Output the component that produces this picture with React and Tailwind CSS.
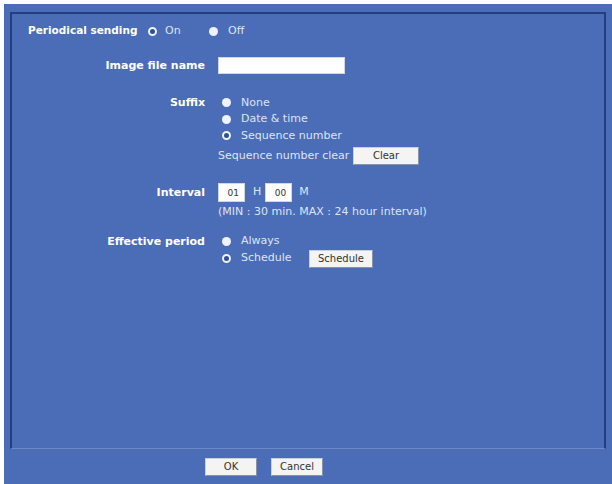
import React, { useState } from 'react';

const font = { fontFamily: '"DejaVu Sans", Verdana, sans-serif' };

const Radio = ({ checked, onClick }) => (
  <span
    onClick={onClick}
    className={`inline-block shrink-0 w-[9px] h-[9px] rounded-full cursor-pointer ${
      checked ? 'bg-[#2f4f96] border-[2.5px] border-[#eef2fb]' : 'bg-[#eef2fb]'
    }`}
  />
);

const Button = ({ children, className = '' }) => (
  <button
    type="button"
    className={`h-[18px] bg-[#f4f4f2] border border-[#c9cfd9] border-b-[#8a93a6] border-r-[#8a93a6] text-[10px] leading-none text-[#333] ${className}`}
  >
    {children}
  </button>
);

const Label = ({ children, className = '' }) => (
  <div className={`text-right text-[11px] font-bold text-white whitespace-nowrap ${className}`}>{children}</div>
);

export default function App() {
  const [sending, setSending] = useState('on');
  const [suffix, setSuffix] = useState('seq');
  const [period, setPeriod] = useState('schedule');

  return (
    <div className="w-[612px] h-[484px] bg-white pt-[4px] pl-[4px]" style={font}>
      <div className="h-[480px] bg-[#4b6db8] pt-[8px] pl-[6px] pr-[6px] flex flex-col">
        <div className="h-[437px] border-2 border-[#233f82] border-b-[#6b88c6] border-b-[1px] pl-[16px] pt-[9px]">
          {/* periodical sending */}
          <div className="flex items-center h-[16px] text-[11px]">
            <span className="w-[120px] text-[10.5px] font-bold text-white whitespace-nowrap">Periodical sending</span>
            <Radio checked={sending === 'on'} onClick={() => setSending('on')} />
            <span className="ml-[8px] w-[44px] text-[#dde4f4]">On</span>
            <Radio checked={sending === 'off'} onClick={() => setSending('off')} />
            <span className="ml-[10px] text-[#dde4f4]">Off</span>
          </div>

          <div className="grid grid-cols-[177px_1fr] gap-x-[13px] mt-[18px] text-[11px] text-[#dde4f4]">
            <Label className="pt-[1px]">Image file name</Label>
            <div>
              <input className="block w-[127px] h-[17px] bg-white border border-[#d0d6e2] outline-none" />
            </div>

            <Label className="mt-[20px]">Suffix</Label>
            <div className="mt-[20px] flex flex-col">
              {[
                ['none', 'None'],
                ['date', 'Date & time'],
                ['seq', 'Sequence number'],
              ].map(([k, t]) => (
                <div key={k} className="flex items-center h-[16.5px] pl-[4px] whitespace-nowrap">
                  <Radio checked={suffix === k} onClick={() => setSuffix(k)} />
                  <span className="ml-[10px]">{t}</span>
                </div>
              ))}
              <div className="flex items-center mt-[3px]">
                <span className="w-[135px] whitespace-nowrap">Sequence number clear</span>
                <Button className="w-[66px]">Clear</Button>
              </div>
            </div>

            <Label className="mt-[18px] pt-[2px]">Interval</Label>
            <div className="mt-[18px]">
              <div className="flex items-center">
                <input
                  defaultValue="01"
                  className="w-[27px] h-[19px] bg-white border border-[#d0d6e2] text-right pr-[5px] text-[9px] text-[#333] outline-none"
                />
                <span className="ml-[8px]">H</span>
                <input
                  defaultValue="00"
                  className="ml-[4px] w-[27px] h-[19px] bg-white border border-[#d0d6e2] text-right pr-[5px] text-[9px] text-[#333] outline-none"
                />
                <span className="ml-[7px]">M</span>
              </div>
              <div className="mt-[2px] whitespace-nowrap">(MIN : 30 min. MAX : 24 hour interval)</div>
            </div>

            <Label className="mt-[13px]">Effective period</Label>
            <div className="mt-[13px] flex flex-col">
              <div className="flex items-center h-[16px] pl-[4px]">
                <Radio checked={period === 'always'} onClick={() => setPeriod('always')} />
                <span className="ml-[10px]">Always</span>
              </div>
              <div className="flex items-center h-[18px] pl-[4px]">
                <Radio checked={period === 'schedule'} onClick={() => setPeriod('schedule')} />
                <span className="ml-[10px] w-[68px]">Schedule</span>
                <Button className="w-[64px] text-[#222]">Schedule</Button>
              </div>
            </div>
          </div>
        </div>

        <div className="flex items-center pl-[195px] pt-[9px] gap-[14px]">
          <Button className="w-[52px]">OK</Button>
          <Button className="w-[52px]">Cancel</Button>
        </div>
      </div>
    </div>
  );
}
